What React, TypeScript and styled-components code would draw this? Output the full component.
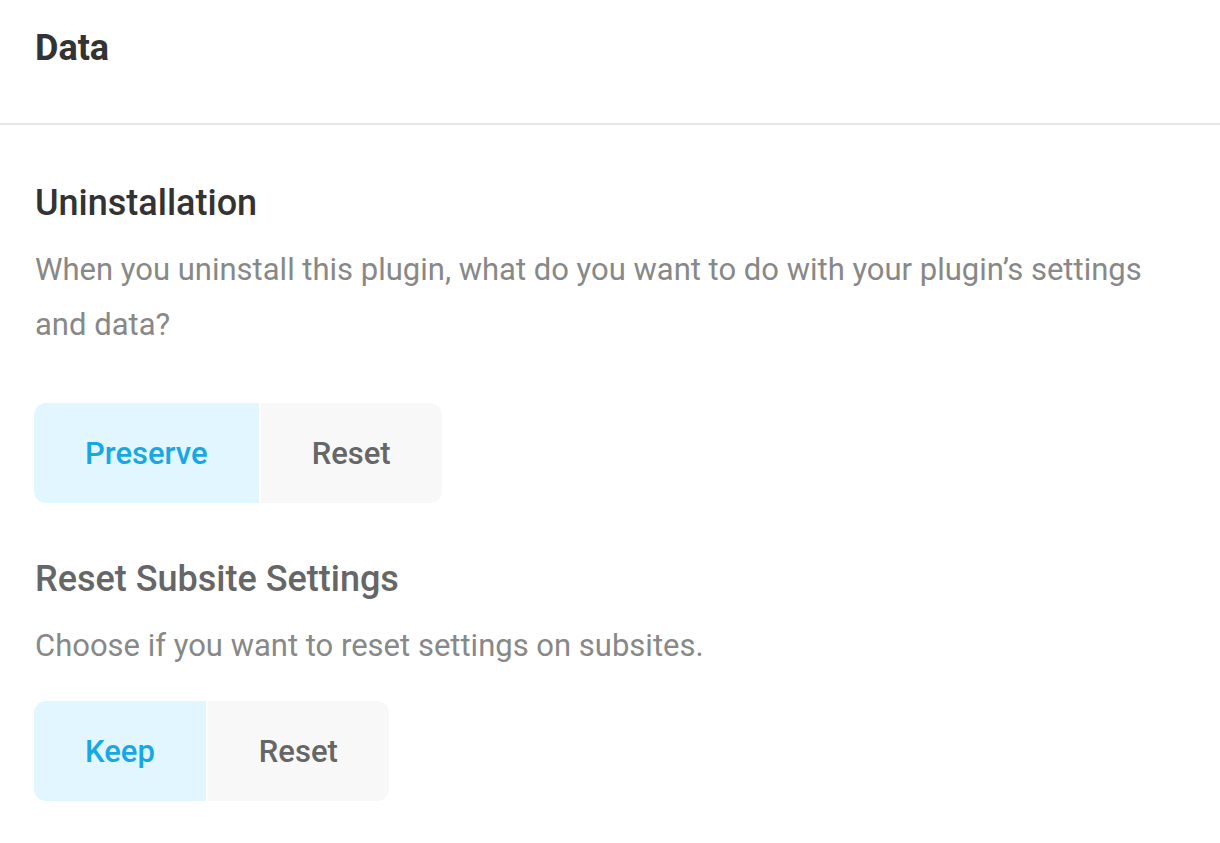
import React, { useState } from "react";
import styled, { createGlobalStyle } from "styled-components";

const GlobalStyle = createGlobalStyle`
  html, body {
    margin: 0;
    padding: 0;
    background: #fff;
  }
  body {
    font-family: Roboto, "Liberation Sans", Arial, sans-serif;
    -webkit-font-smoothing: antialiased;
  }
`;

type Option = { value: string; label: string };

type SettingProps = {
  title: string;
  description: string;
  options: Option[];
  value: string;
  onChange: (v: string) => void;
  muted?: boolean;
};

function SettingBlock({ title, description, options, value, onChange, muted }: SettingProps) {
  return (
    <Section>
      <SectionTitle $muted={muted}>{title}</SectionTitle>
      <Description $spaced={!muted}>{description}</Description>
      <TabGroup>
        {options.map((opt) => (
          <TabButton
            key={opt.value}
            type="button"
            $active={opt.value === value}
            onClick={() => onChange(opt.value)}
          >
            {opt.label}
          </TabButton>
        ))}
      </TabGroup>
    </Section>
  );
}

export default function App() {
  const [uninstall, setUninstall] = useState("preserve");
  const [subsite, setSubsite] = useState("keep");

  return (
    <>
      <GlobalStyle />
      <Box>
        <Header>
          <BoxTitle>Data</BoxTitle>
        </Header>
        <Body>
          <SettingBlock
            title="Uninstallation"
            description="When you uninstall this plugin, what do you want to do with your plugin’s settings and data?"
            options={[
              { value: "preserve", label: "Preserve" },
              { value: "reset", label: "Reset" },
            ]}
            value={uninstall}
            onChange={setUninstall}
          />
          <SettingBlock
            title="Reset Subsite Settings"
            description="Choose if you want to reset settings on subsites."
            options={[
              { value: "keep", label: "Keep" },
              { value: "reset", label: "Reset" },
            ]}
            value={subsite}
            onChange={setSubsite}
            muted
          />
        </Body>
      </Box>
    </>
  );
}

const Box = styled.div`
  width: 1220px;
  background: #fff;
`;

const Header = styled.div`
  padding: 18px 35px 45px;
  border-bottom: 2px solid #e6e6e6;
`;

const BoxTitle = styled.h2`
  margin: 0;
  font-size: 36px;
  line-height: 60px;
  font-weight: 700;
  color: #333;
`;

const Body = styled.div`
  padding: 53px 35px 40px 34px;
  display: flex;
  flex-direction: column;
  gap: 51px;
`;

const Section = styled.div`
  display: flex;
  flex-direction: column;
  align-items: flex-start;
`;

const SectionTitle = styled.h3<{ $muted?: boolean }>`
  margin: 0 0 0 1px;
  font-size: 36px;
  line-height: 50px;
  font-weight: 500;
  color: ${(p) => (p.$muted ? "#666" : "#333")};
`;

const Description = styled.p<{ $spaced?: boolean }>`
  margin: 14px 0 ${(p) => (p.$spaced ? "51px" : "28px")} 1px;
  max-width: 1150px;
  font-size: 31px;
  line-height: 55px;
  font-weight: 400;
  color: #888;
`;

const TabGroup = styled.div`
  display: flex;
  gap: 2px;
  border-radius: 12px;
  overflow: hidden;
`;

const TabButton = styled.button<{ $active?: boolean }>`
  height: 100px;
  padding: 0 51px;
  border: 0;
  margin: 0;
  font-family: Roboto, "Liberation Sans", Arial, sans-serif;
  font-size: 31px;
  font-weight: 500;
  cursor: pointer;
  background: ${(p) => (p.$active ? "#e1f6ff" : "#f8f8f8")};
  color: ${(p) => (p.$active ? "#17a8e3" : "#666")};
`;
